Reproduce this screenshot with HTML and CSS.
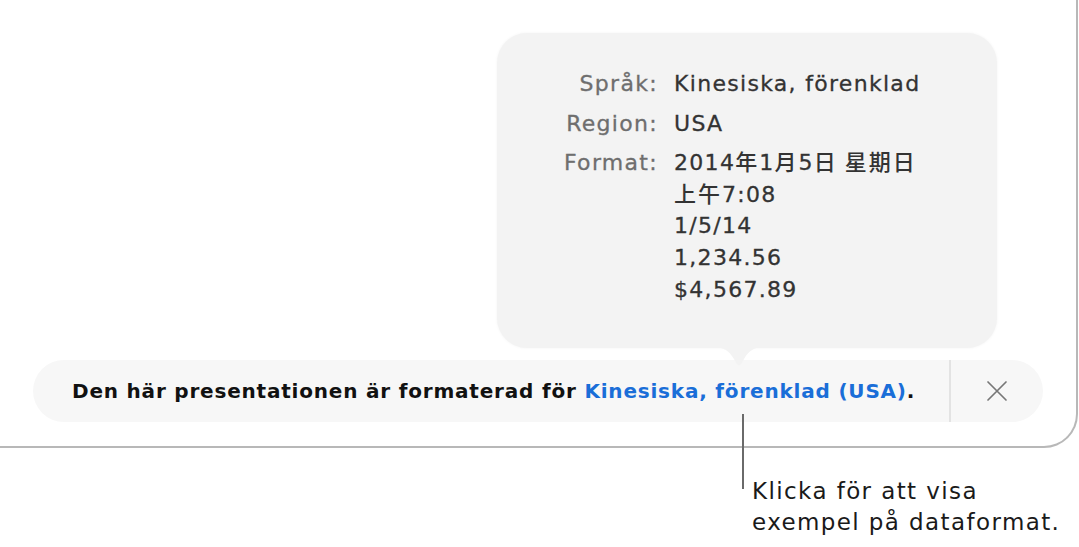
FILE: index.html
```html
<!DOCTYPE html>
<html lang="sv">
<head>
<meta charset="utf-8">
<link rel="stylesheet" href="styles.css">
</head>
<body>
<div class="stage">
  <div class="window">
    <div class="popover">
      <div class="info">
        <div class="label">Språk:</div>
        <div class="value">Kinesiska, förenklad</div>
        <div class="label">Region:</div>
        <div class="value">USA</div>
        <div class="label">Format:</div>
        <div class="value">
          <div class="line">2014<span class="cjk">年</span>1<span class="cjk">月</span>5<span class="cjk">日 星期日</span></div>
          <div class="line"><span class="cjk">上午</span>7:08</div>
          <div class="line">1/5/14</div>
          <div class="line">1,234.56</div>
          <div class="line">$4,567.89</div>
        </div>
      </div>
      <svg class="arrow" width="56" height="25" viewBox="0 0 56 25">
        <path d="M0 0 C14 0 18 4 23 12 L25.5 16.5 Q28 20 30.5 16.5 L33 12 C38 4 42 0 56 0 Z" fill="#f3f3f3"/>
      </svg>
    </div>
    <div class="banner">
      <p class="message">Den här presentationen är formaterad för <span class="link">Kinesiska, förenklad (USA)</span>.</p>
      <div class="close">
        <svg width="22" height="22" viewBox="0 0 22 22"><path d="M2 2 L20 20 M20 2 L2 20" stroke="#777" stroke-width="1.7" stroke-linecap="round"/></svg>
      </div>
    </div>
  </div>
  <div class="callout-line"></div>
  <p class="callout">Klicka för att visa<br>exempel på dataformat.</p>
</div>
</body>
</html>
```

FILE: styles.css
```css
html, body {
  margin: 0;
  padding: 0;
  background: #ffffff;
}
body {
  width: 1079px;
  height: 547px;
  overflow: hidden;
  font-family: "DejaVu Sans", "Noto Sans CJK SC", sans-serif;
}
.stage {
  position: relative;
  width: 1079px;
  height: 547px;
}
.window {
  position: relative;
  box-sizing: border-box;
  width: 1078px;
  height: 448px;
  border-right: 2px solid #b8b8b8;
  border-bottom: 2px solid #b8b8b8;
  border-bottom-right-radius: 34px;
  padding-top: 360px;
  padding-left: 33px;
}
.popover {
  position: absolute;
  left: 497px;
  top: 33px;
  width: 500px;
  box-sizing: border-box;
  height: 315px;
  background: #f3f3f3;
  border-radius: 30px;
  box-shadow: 0 0 3px rgba(0, 0, 0, 0.05);
  padding-top: 35px;
  z-index: 2;
}
.info {
  display: grid;
  grid-template-columns: 161px auto;
  column-gap: 16px;
  row-gap: 8px;
  font-size: 22px;
  line-height: 31.6px;
  font-weight: 400;
  letter-spacing: 1.3px;
  -webkit-text-stroke: 0.3px currentColor;
}
.label {
  text-align: right;
  color: #6e6e6e;
}
.value {
  color: #333333;
}
.line {
  height: 31.6px;
  white-space: nowrap;
}
.cjk {
  font-family: "Noto Sans CJK SC", sans-serif;
  font-weight: 500;
  letter-spacing: 2px;
  line-height: 18px;
  -webkit-text-stroke: 0;
}
.arrow {
  position: absolute;
  left: 214px;
  bottom: -24px;
}
.banner {
  display: flex;
  align-items: stretch;
  width: 1010px;
  height: 62px;
  background: #f7f7f7;
  border-radius: 31px;
}
.message {
  flex: 1;
  margin: 0;
  padding-left: 39px;
  align-self: center;
  font-size: 20px;
  font-weight: 700;
  color: #111111;
  letter-spacing: 0.8px;
}
.link {
  color: #1a6ed8;
}
.close {
  width: 92px;
  border-left: 2px solid #e3e3e3;
  display: flex;
  align-items: center;
  justify-content: center;
}
.close svg {
  display: block;
}
.callout-line {
  position: absolute;
  left: 742px;
  top: 414px;
  width: 2px;
  height: 75px;
  background: #6a6a6a;
}
.callout {
  margin: 28px 0 0 752px;
  font-size: 23px;
  line-height: 31px;
  color: #1a1a1a;
  font-weight: 400;
  letter-spacing: 1.4px;
}
```
